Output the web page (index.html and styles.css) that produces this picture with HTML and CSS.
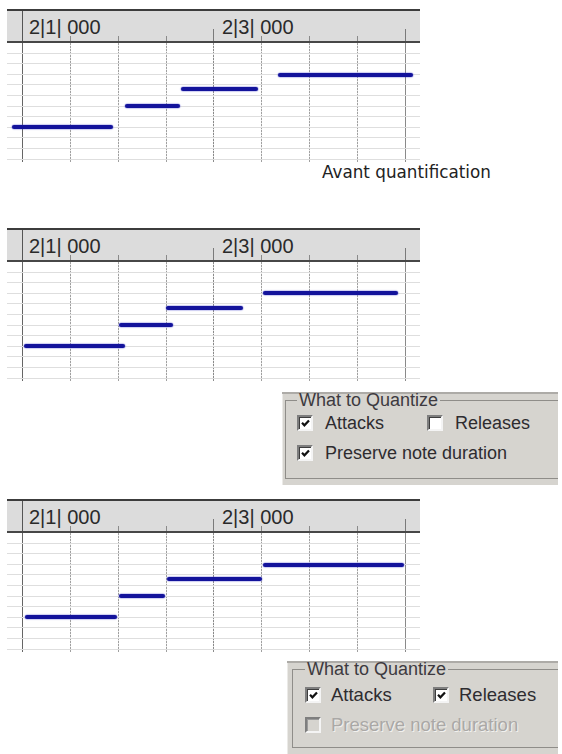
FILE: index.html
```html
<!DOCTYPE html>
<html lang="fr">
<head>
    <meta charset="UTF-8">
    <meta name="viewport" content="width=device-width, initial-scale=1.0">
    <title>Quantification</title>
    <link rel="stylesheet" href="styles.css">
    <script>
        // one list per piano roll: [left, width, top] inside the grid, in px
        const rolls = [
            [[5, 101, 82], [118, 55, 61], [174, 77, 44], [271, 135, 30]],
            [[17, 101, 82], [112, 54, 61], [159, 77, 44], [256, 135, 29]],
            [[18, 92, 82], [112, 46, 61], [160, 95, 44], [256, 141, 30]]
        ];

        function drawNotes() {
            let grids = document.querySelectorAll(".grid");
            grids.forEach((grid, index) => {
                rolls[index].forEach(n => {
                    let note = document.createElement("div");
                    note.className = "note";
                    note.style.left = n[0] + "px";
                    note.style.width = n[1] + "px";
                    note.style.top = n[2] + "px";
                    grid.appendChild(note);
                });
            });
        }

        window.onload = drawNotes;
    </script>
</head>
<body>
    <div class="page">
        <!-- Before quantization -->
        <div class="roll">
            <div class="ruler">
                <span class="mark">2|1| 000</span>
                <span class="mark">2|3| 000</span>
            </div>
            <div class="grid"></div>
        </div>
        <p class="caption">Avant quantification</p>

        <!-- Attacks only -->
        <div class="roll roll-next">
            <div class="ruler">
                <span class="mark">2|1| 000</span>
                <span class="mark">2|3| 000</span>
            </div>
            <div class="grid"></div>
        </div>
        <div class="quant">
            <fieldset>
                <legend>What to Quantize</legend>
                <div class="opts">
                    <label class="opt"><span class="box"><svg viewBox="0 0 12 12"><path d="M2.2 5.2l2.6 2.8 5-5.4"/></svg></span>Attacks</label>
                    <label class="opt"><span class="box"></span>Releases</label>
                    <label class="opt wide"><span class="box"><svg viewBox="0 0 12 12"><path d="M2.2 5.2l2.6 2.8 5-5.4"/></svg></span>Preserve note duration</label>
                </div>
            </fieldset>
        </div>

        <!-- Attacks and releases -->
        <div class="roll roll-last">
            <div class="ruler">
                <span class="mark">2|1| 000</span>
                <span class="mark">2|3| 000</span>
            </div>
            <div class="grid"></div>
        </div>
        <div class="quant quant-last">
            <fieldset>
                <legend>What to Quantize</legend>
                <div class="opts">
                    <label class="opt"><span class="box"><svg viewBox="0 0 12 12"><path d="M2.2 5.2l2.6 2.8 5-5.4"/></svg></span>Attacks</label>
                    <label class="opt"><span class="box"><svg viewBox="0 0 12 12"><path d="M2.2 5.2l2.6 2.8 5-5.4"/></svg></span>Releases</label>
                    <label class="opt wide off"><span class="box"></span>Preserve note duration</label>
                </div>
            </fieldset>
        </div>
    </div>
</body>
</html>
```

FILE: styles.css
```css
body {
    margin: 0;
    background-color: #fff;
    font-family: "Liberation Sans", Arial, sans-serif;
    color: #333;
}
.page {
    padding-top: 9px;
}

/* piano roll */
.roll {
    margin-left: 7px;
    width: 413px;
}
.roll-next {
    margin-top: 46px;
}
.roll-last {
    margin-top: 14px;
}
.ruler {
    display: flex;
    height: 30px;
    padding-left: 22px;
    border-top: 2px solid #3c3c3c;
    border-bottom: 2px solid #474747;
    font-size: 20px;
    line-height: 32px;
    color: #2a2a2a;
    background:
        linear-gradient(#555, #555) 15px 0 / 1px 100% no-repeat,
        linear-gradient(#7a7a7a, #7a7a7a) 206px 100% / 1px 12px no-repeat,
        linear-gradient(#7a7a7a, #7a7a7a) 398px 100% / 1px 12px no-repeat,
        repeating-linear-gradient(to right, #8a8a8a 0 1px, transparent 1px 47.875px) 15px 100% / 384px 5px no-repeat,
        #dcdcdc;
}
.mark:first-child {
    width: 193px;
}
.grid {
    position: relative;
    height: 119px;
    background:
        repeating-linear-gradient(to bottom, transparent 0 9.6px, #dedede 9.6px 10.6px),
        linear-gradient(#666, #666) 15px 0 / 1px 100% no-repeat,
        linear-gradient(#8a8a8a, #8a8a8a) 398px 0 / 1px 100% no-repeat,
        repeating-linear-gradient(to bottom, transparent 0 2px, rgba(255, 255, 255, 0.75) 2px 3px),
        linear-gradient(#8a8a8a, #8a8a8a) 206px 0 / 1px 100% no-repeat,
        repeating-linear-gradient(to right, #a0a0a0 0 1px, transparent 1px 47.875px) 15px 0 / 384px 100% no-repeat,
        #fff;
}
.note {
    position: absolute;
    height: 4px;
    border-radius: 2px;
    background-color: #13139b;
    box-shadow: 0 0 1px 0.5px rgba(50, 50, 200, 0.45);
}
.caption {
    margin: 0 0 0 322px;
    font-family: "DejaVu Sans", sans-serif;
    font-size: 16.8px;
    line-height: 20px;
    color: #222;
}

/* quantize dialog */
.quant {
    width: 276px;
    margin: 11px 0 0 282px;
    padding-bottom: 6px;
    background-color: #d6d4cf;
    box-shadow: inset 0 2px 0 #adaba7, inset 1px 0 0 #ebeae7;
}
.quant-last {
    width: 271px;
    margin: 9px 0 0 287px;
}
fieldset {
    margin: 0 0 0 3px;
    padding: 4px 0 14px 11px;
    min-width: 0;
    border: 1px solid #8f8d89;
    border-right: none;
}
.quant-last fieldset {
    margin-left: 5px;
    padding: 7px 0 11px 12px;
}
legend {
    padding: 0 2px;
    font-size: 18px;
    line-height: 16px;
    color: #3d3a40;
}
.opts {
    display: grid;
    grid-template-columns: 130px auto;
    row-gap: 8px;
}
.quant-last .opts {
    grid-template-columns: 128px auto;
}
.opt {
    display: flex;
    align-items: center;
    gap: 12px;
    height: 22px;
    font-size: 18px;
    color: #2e2c30;
}
.quant-last .opt {
    gap: 10px;
    font-size: 18.5px;
}
.wide {
    grid-column: 1 / -1;
}
.box {
    display: flex;
    align-items: center;
    justify-content: center;
    width: 12px;
    height: 12px;
    border: 2px solid;
    border-color: #7e7e7e #f4f4f4 #f4f4f4 #7e7e7e;
    box-shadow: inset 1px 1px 0 #3e3e3e;
    background-color: #fff;
}
.box svg {
    width: 11px;
    height: 11px;
    fill: none;
    stroke: #111;
    stroke-width: 2.4;
}
.off {
    color: #aaa8a6;
    text-shadow: 1px 1px 0 #f2f1ee;
}
.off .box {
    background-color: #d6d4cf;
    box-shadow: inset 1px 1px 0 #9a9a9a;
}
```
